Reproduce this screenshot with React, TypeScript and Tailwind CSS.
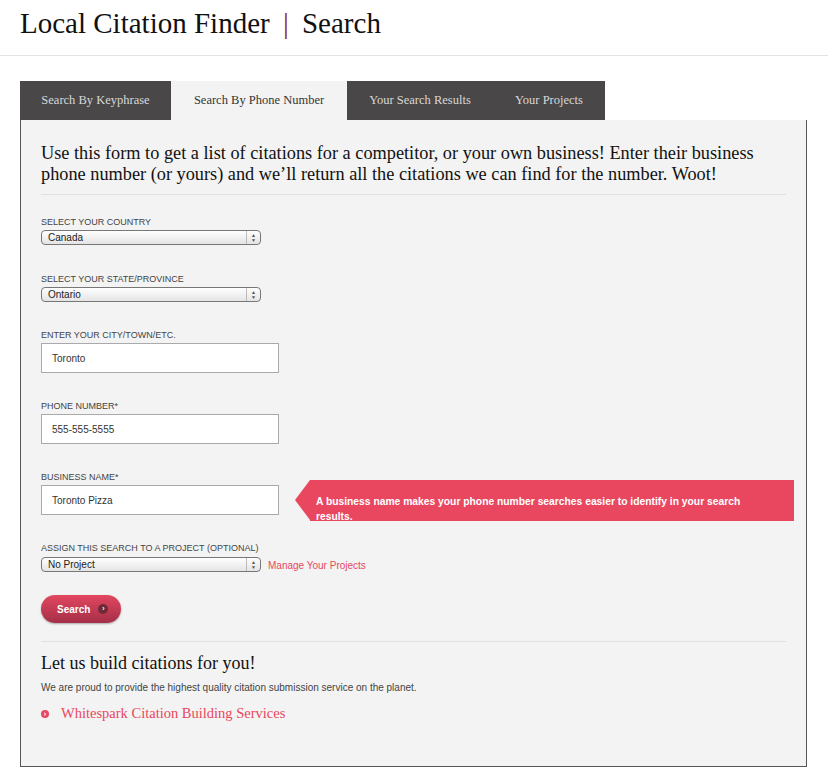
const serif = { fontFamily: '"Liberation Serif", "Times New Roman", serif' }
const sans = { fontFamily: '"Liberation Sans", Arial, sans-serif' }

const Label = ({ children }: { children: React.ReactNode }) => (
  <div className="text-[9px] leading-[11px] uppercase text-[#444]" style={sans}>
    {children}
  </div>
)

const FakeSelect = ({ value }: { value: string }) => (
  <div
    className="flex items-center justify-between w-[220px] h-[15px] rounded-[4px] border border-[#777] bg-gradient-to-b from-white to-[#e4e4e4] pl-[6px] pr-[4px] text-[10px] text-[#222]"
    style={sans}
  >
    <span>{value}</span>
    <span className="flex items-center h-full pl-[4px] border-l border-[#bbb] text-[5px] leading-[5px] text-[#555] flex-col justify-center">
      <span>▲</span>
      <span>▼</span>
    </span>
  </div>
)

const Field = ({ value }: { value: string }) => (
  <div
    className="flex items-center w-[238px] h-[30px] border border-[#aaa] bg-white px-[10px] text-[10px] text-[#333]"
    style={sans}
  >
    {value}
  </div>
)

const tabs = ['Search By Keyphrase', 'Search By Phone Number', 'Your Search Results', 'Your Projects']

export default function App() {
  return (
    <div className="w-[828px] min-h-[784px] bg-white">
      <header className="h-[56px] border-b border-[#e3e3e3] pl-[20px] flex items-center">
        <h1 className="text-[29px] text-[#111] pb-[7px]" style={serif}>
          Local Citation Finder <span className="text-[#8b1e1e] mx-[6px]">|</span> Search
        </h1>
      </header>

      <div className="px-[20px] pt-[25px]">
        <nav className="flex w-[585px] h-[39px] bg-[#4a4748]">
          {tabs.map((t, i) => (
            <div
              key={t}
              className={
                i === 1
                  ? 'flex items-center justify-center bg-[#f3f3f3] text-[#333] text-[12.5px] w-[176px]'
                  : 'flex items-center justify-center text-[#d8d8d8] text-[12.5px] ' +
                    (i === 0 ? 'w-[151px]' : i === 2 ? 'w-[146px]' : 'w-[112px]')
              }
              style={serif}
            >
              {t}
            </div>
          ))}
        </nav>

        <main className="w-[787px] h-[647px] border border-[#555] border-t-0 bg-[#f3f3f3] px-[20px] pt-[23px]">
          <p className="text-[18.3px] leading-[21px] text-[#111] pb-[9px] border-b border-[#e0e0e0] whitespace-nowrap" style={serif}>
            Use this form to get a list of citations for a competitor, or your own business! Enter their business
            <br />
            phone number (or yours) and we’ll return all the citations we can find for the number. Woot!
          </p>

          <div className="flex flex-col gap-[29px] pt-[22px]">
            <div className="flex flex-col gap-[2px]">
              <Label>Select your country</Label>
              <FakeSelect value="Canada" />
            </div>
            <div className="flex flex-col gap-[2px]">
              <Label>Select your state/province</Label>
              <FakeSelect value="Ontario" />
            </div>
          </div>

          <div className="flex flex-col gap-[28px] pt-[28px]">
            <div className="flex flex-col gap-[2px]">
              <Label>Enter your city/town/etc.</Label>
              <Field value="Toronto" />
            </div>
            <div className="flex flex-col gap-[2px]">
              <Label>Phone number*</Label>
              <Field value="555-555-5555" />
            </div>
            <div className="flex flex-col gap-[2px]">
              <Label>Business name*</Label>
              <div className="flex items-start">
                <Field value="Toronto Pizza" />
                <div className="relative ml-[31px] mt-[-5px] mr-[-8px] flex-1 h-[41px] bg-[#e8475f]">
                  <div className="absolute left-[-15px] top-0 w-0 h-0 border-y-[20.5px] border-y-transparent border-r-[15px] border-r-[#e8475f]" />
                  <p
                    className="h-full overflow-hidden pl-[6px] pr-[44px] pt-[14px] text-[10.3px] leading-[15px] font-bold text-white"
                    style={sans}
                  >
                    A business name makes your phone number searches easier to identify in your search results.
                  </p>
                </div>
              </div>
            </div>
          </div>

          <div className="flex flex-col gap-[2px] pt-[22px]">
            <Label>Assign this search to a project (optional)</Label>
            <div className="flex items-center gap-[7px]">
              <FakeSelect value="No Project" />
              <a className="text-[10px] text-[#e8475f] pt-[2px]" style={sans}>
                Manage Your Projects
              </a>
            </div>
          </div>

          <button
            className="mt-[22px] flex items-center gap-[8px] h-[28px] w-[80px] rounded-full bg-gradient-to-b from-[#e3465f] to-[#a52f48] pl-[16px] shadow-[0_1px_2px_rgba(0,0,0,0.3)] text-[10px] font-bold text-white"
            style={sans}
          >
            Search
            <span className="flex items-center justify-center w-[10px] h-[10px] rounded-full bg-[#6e2a36] text-[7px]">›</span>
          </button>

          <div className="mt-[18px] border-t border-[#e0e0e0] pt-[8px]">
            <h2 className="text-[18px] text-[#111]" style={serif}>Let us build citations for you!</h2>
            <p className="mt-[3px] text-[10px] text-[#444]" style={sans}>
              We are proud to provide the highest quality citation submission service on the planet.
            </p>
            <div className="mt-[8px] flex items-center gap-[12px]">
              <span className="flex items-center justify-center w-[8px] h-[8px] rounded-full bg-[#e8475f] text-white text-[7px] leading-none font-bold">›</span>
              <a className="text-[14.5px] text-[#e8475f]" style={serif}>Whitespark Citation Building Services</a>
            </div>
          </div>
        </main>
      </div>
    </div>
  )
}
